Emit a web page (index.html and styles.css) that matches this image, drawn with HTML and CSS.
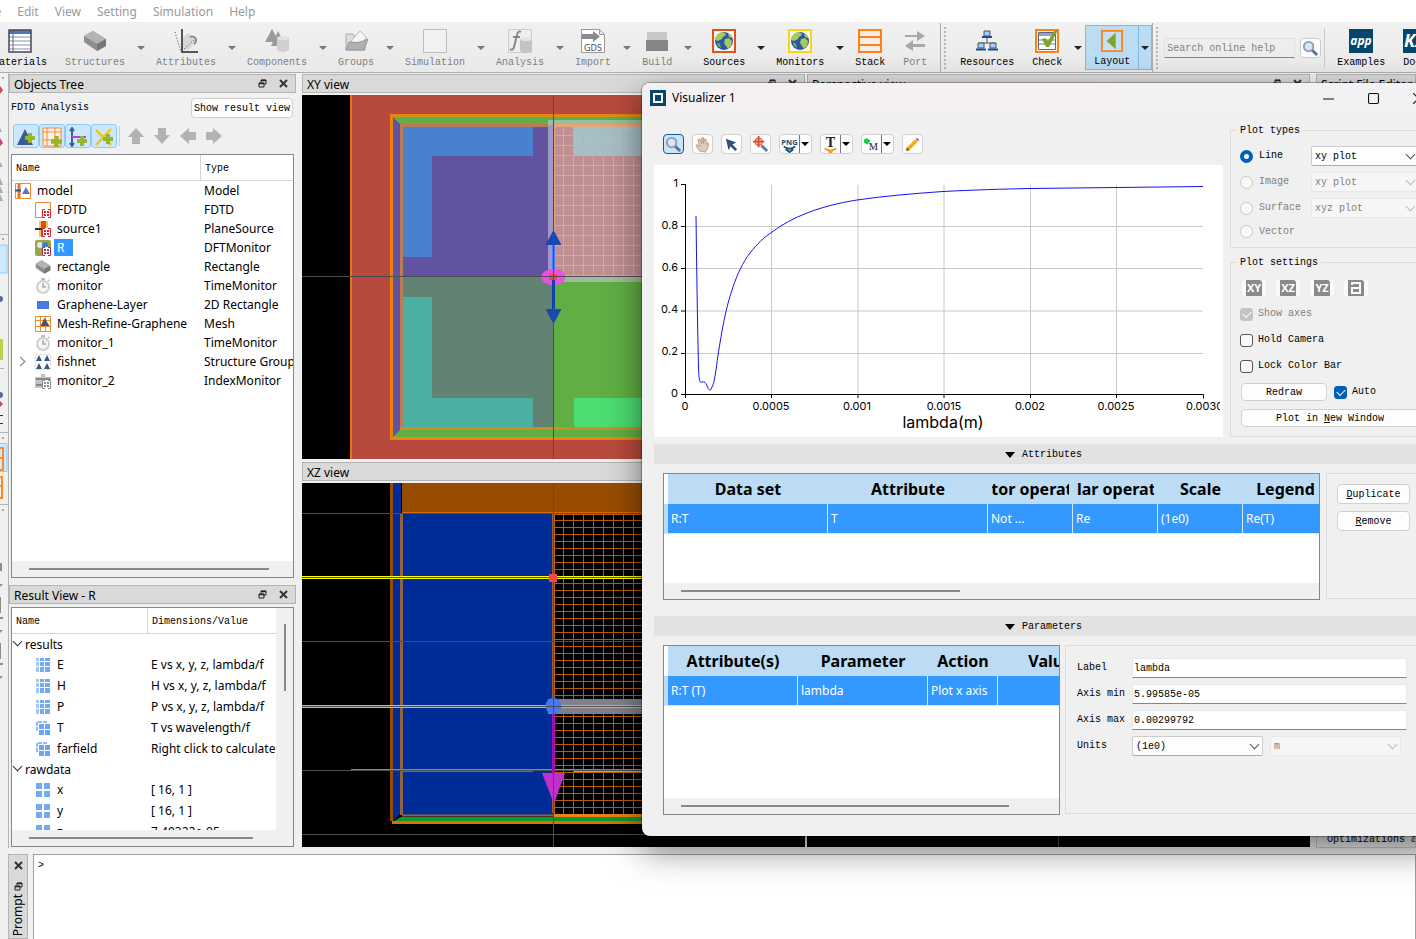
FILE: index.html
```html
<!doctype html>
<html lang="en">
<head>
<meta charset="utf-8">
<title>FDTD Solutions</title>
<link rel="stylesheet" href="styles.css">
</head>
<body>
<svg class="defs" aria-hidden="true">
  <symbol id="restore" viewBox="0 0 9 9"><path d="M3 3V1h5v4H6M1 4h5v4H1z" fill="none" stroke="#222"/><path d="M3 1.500h5M1 4.500h5" stroke="#222" stroke-width="1.500"/></symbol>
  <symbol id="cross" viewBox="0 0 9 9"><path d="M1 1l7 7M8 1L1 8" stroke="#333" stroke-width="2"/></symbol>
  <symbol id="brick" viewBox="0 0 24 24"><path d="M1 7l9-5 13 8v7l-9 5L1 13z" fill="#8e8e8e"/><path d="M1 7l9-5 13 8-9 5z" fill="#b4b4b4"/><path d="M14 15l9-5v7l-9 5z" fill="#777"/></symbol>
  <symbol id="globe" viewBox="0 0 24 24"><rect x="1" y="1" width="22" height="22" fill="#f6f6f2" stroke="currentColor" stroke-width="2"/><circle cx="12" cy="12" r="9" fill="#2857a6"/><path d="M6 5l4-2 3 1 1 2-3 2-1 2-4 2-3-1 1-4zM13 10l4-1 3 3-1 5-3 3-2-3-2-3zM16 4l3 2 1 3-3-1z" fill="#a8c95a"/><path d="M5 13l3 2 1 4-3-2z" fill="#7fae44"/></symbol>
  <symbol id="lens" viewBox="0 0 18 18"><path d="M10 10l6 6" stroke="#5b6e94" stroke-width="3"/><circle cx="7" cy="7" r="5" fill="#d9e6fa" stroke="#8f9ab0" stroke-width="2"/></symbol>
  <symbol id="clock" viewBox="0 0 16 16"><circle cx="8" cy="9" r="6" fill="#f6f6f6" stroke="#cfcfcf" stroke-width="2"/><path d="M8 5v4h3" fill="none" stroke="#aaa" stroke-width="1.500"/><path d="M6 1h4M13 2l1 1" stroke="#bbb" stroke-width="2"/></symbol>
  <symbol id="dots" viewBox="0 0 9 9"><path d="M0 0h9v9H0z" fill="#fff"/><path d="M3 .5H.5v8H3M6 .5h2.500v8H6" fill="none" stroke="currentColor"/><path d="M2 2h2v2H2zM5 2h2v2H5zM2 5h2v2H2zM5 5h2v2H5z" fill="currentColor"/></symbol>
  <symbol id="cube3" viewBox="0 0 14 14"><path d="M0 0h3v3H0zM4 0h4v3H4zM9 0h5v3H9zM0 4h3v4H0zM0 9h3v5H0z" fill="#a4c8f6"/><path d="M4 4h4v4H4zM9 4h5v4H9zM4 9h4v5H4zM9 9h5v5H9zM4 0h4v3H4zM9 0h5v3H9z" fill="#72abf5"/></symbol>
  <symbol id="cube2" viewBox="0 0 14 14"><path d="M1 10V1h10" fill="none" stroke="#90baf4" stroke-width="2" stroke-dasharray="4 1"/><path d="M3 3h5v5H3zM9 3h5v5H9zM3 9h5v5H3zM9 9h5v5H9z" fill="#68a5f5"/></symbol>
  <symbol id="cube1" viewBox="0 0 14 14"><path d="M0 0h6v6H0zM8 0h6v6H8zM0 8h6v6H0zM8 8h6v6H8z" fill="#72abf5"/></symbol>
  <symbol id="plus" viewBox="0 0 10 10"><path d="M3 0h4v3h3v4H7v3H3V7H0V3h3z" fill="#9ab52c"/></symbol>
  <symbol id="arrow" viewBox="0 0 18 18"><path d="M9 1l8 9h-4v7H5v-7H1z" fill="#b2b2b2"/></symbol>
  <pattern id="meshXY" x="261" y="40" width="10" height="10" patternUnits="userSpaceOnUse"><path d="M0 .5h10M.5 0v10" stroke="#deaa86"/></pattern>
  <pattern id="meshXZ" x="261" y="37" width="10" height="7" patternUnits="userSpaceOnUse"><path d="M0 .5h10M.5 0v7" stroke="#b45c08"/></pattern>
</svg>

<nav class="menubar">
  <a href="#">File</a><a href="#">Edit</a><a href="#">View</a><a href="#">Setting</a><a href="#">Simulation</a><a href="#">Help</a>
</nav>

<header class="toolbar">
  <div class="tools first">
    <button class="tool"><svg viewBox="0 0 24 24"><path d="M1 1h22v22H1z" fill="#fff"/><path d="M1 1h22v4H1z" fill="#4a78c0"/><path d="M1 8h22M1 12h22M1 16h22M1 20h22" stroke="#c3c8d6" stroke-width="2"/><path d="M5 1v22" stroke="#667"/><path d="M1 1h22v22H1z" fill="none" stroke="#4a4456" stroke-width="1.500"/></svg>Materials</button>
    <button class="tool" disabled><svg><use href="#brick"/></svg>Structures</button><button class="drop off" aria-label="Structures menu"></button>
    <button class="tool" disabled><svg viewBox="0 0 24 24"><path d="M7 9l8-5 7 9-8 8-7-1z" fill="#d6d6d6"/><path d="M8 0v23h16" fill="none" stroke="#555" stroke-width="2"/><path d="M1 3l6 20M8 22L20 11" stroke="#444" stroke-dasharray="1 2"/><path d="M16 8a4 4 0 1 1 4 7" fill="none" stroke="#888" stroke-width="2"/></svg>Attributes</button><button class="drop off" aria-label="Attributes menu"></button>
    <button class="tool" disabled><svg viewBox="0 0 24 24"><path d="M7 0l7 13H0zM13 2l8 15H6z" fill="#9b9b9b"/><path d="M12 9v12q6 4 12 0V9z" fill="#cfcfcf"/><ellipse cx="18" cy="9" rx="6" ry="2" fill="#e3e3e3"/></svg>Components</button><button class="drop off" aria-label="Components menu"></button>
    <button class="tool" disabled><svg viewBox="0 0 24 24"><path d="M2 5h7l2 3h10v13H2z" fill="#ddd" stroke="#aaa"/><path d="M7 12l9-10 6 6-4 9z" fill="#f6f6f6" stroke="#bbb"/><path d="M5 13q9 2 19-3l-4 11H2z" fill="#b0b0b0" stroke="#999"/></svg>Groups</button><button class="drop off" aria-label="Groups menu"></button>
    <button class="tool" disabled><svg viewBox="0 0 24 24"><path d="M.5.5h23v23H.5z" fill="#f1f1f1" stroke="#bdbdbd"/></svg>Simulation</button><button class="drop off" aria-label="Simulation menu"></button>
    <button class="tool" disabled><svg viewBox="0 0 24 24"><path d="M.5.5h23v23H.5z" fill="#eee" stroke="#ccc"/><path d="M13 3q-3-2-4 3L6 18q-1 4-4 2M5 8h7" fill="none" stroke="#888" stroke-width="2"/><path d="M12 10v12q6 3 12 0V10z" fill="#c4c4c4"/><ellipse cx="18" cy="10" rx="6" ry="2" fill="#e3e3e3"/></svg>Analysis</button><button class="drop off" aria-label="Analysis menu"></button>
    <button class="tool" disabled><svg viewBox="0 0 24 24"><path d="M.5.5h18l5 5v18H.5zM18.500.5v5h5" fill="#fff" stroke="#999"/><path d="M1 5h11V2l7 5.500-7 5.500v-3H1z" fill="#8a8a8a"/><text x="12" y="22" font-size="9" text-anchor="middle" class="sans" fill="#444">GDS</text></svg>Import</button><button class="drop off" aria-label="Import menu"></button>
    <button class="tool" disabled><svg viewBox="0 0 24 24"><path d="M2 3h20v8H2z" fill="#c8c8c8"/><path d="M1 11h22v11H1z" fill="#858585"/></svg>Build</button><button class="drop off" aria-label="Build menu"></button>
    <button class="tool"><svg color="#e0541c"><use href="#globe"/></svg>Sources</button><button class="drop" aria-label="Sources menu"></button>
    <button class="tool"><svg color="#f8d70c"><use href="#globe"/></svg>Monitors</button><button class="drop" aria-label="Monitors menu"></button>
    <button class="tool"><svg viewBox="0 0 24 24"><path d="M1 1h22v22H1zM1 8h22M1 16h22" fill="#f4efe9" stroke="#ff8212" stroke-width="2"/></svg>Stack</button>
    <button class="tool" disabled><svg viewBox="0 0 24 24"><path d="M2 6h12V2l8 5-8 5V8H2zM22 15H10v-4l-8 6 8 5v-4h12z" fill="#a8a8a8"/></svg>Port</button>
  </div>
  <div class="tools grip">
    <button class="tool"><svg viewBox="0 0 24 24"><path d="M12 7v7M4 17v-3h16v3" fill="none" stroke="#555"/><path d="M9 2h6v5H9zM3 14h6v5H3zM15 14h6v5h-6z" fill="#a9cdf2" stroke="#456"/><path d="M7 8h10M1 20.500h10M13 20.500h10" stroke="#1f4b94" stroke-width="2"/></svg>Resources</button>
    <button class="tool"><svg viewBox="0 0 24 24"><path d="M1 1h22v22H1z" fill="#f6f2ee" stroke="#ff8212" stroke-width="2"/><path d="M3.500 3.500h17v17h-17z" fill="#fff" stroke="#667"/><path d="M4 4h16v3H4z" fill="#88a6dd"/><path d="M4 11h16M4 15h16" stroke="#b8bfd4" stroke-width="2"/><path d="M7 10l3-1 3 3 6-10 4-1-9 17h-3z" fill="#7fa42c"/></svg>Check</button><button class="drop" aria-label="Check menu"></button>
    <div class="active"><button class="tool"><svg viewBox="0 0 24 24"><path d="M1 1h22v22H1z" fill="#c7dff2" stroke="#ff8212" stroke-width="2"/><path d="M16 3v18L6 12z" fill="#82a32e"/></svg>Layout</button><button class="drop" aria-label="Layout menu"></button></div>
  </div>
  <div class="tools grip">
    <input class="search" type="text" aria-label="Search online help" placeholder="Search online help">
    <button class="go" aria-label="Search"><svg><use href="#lens"/></svg></button>
    <span class="sep"></span>
    <button class="tool"><svg viewBox="0 0 24 24"><path d="M0 0h24v24H0z" fill="#05476a"/><text x="12" y="16" font-size="12" font-weight="bold" font-style="italic" text-anchor="middle" class="sans" fill="#fff">app</text></svg>Examples</button>
    <button class="tool"><svg viewBox="0 0 24 24"><path d="M0 0h24v24H0z" fill="#05476a"/><text x="1" y="18" font-size="18" font-weight="bold" font-style="italic" class="sans" fill="#fff">KX</text></svg>Docs</button>
  </div>
</header>

<main class="workspace">
  <svg class="rail">
    <path d="M0 73v-8l3 5zM0 331v-3l3 3-3 3" fill="#c2476a"/><path d="M0 13l3 4-3 4z" fill="#d0474f"/>
    <path d="M0 55l2 4H0zM0 89l3 5H0zM0 105l3 7H0zM0 113l3 7H0zM0 121l3 7H0z" fill="#aaa"/>
    <path d="M-2 172h9v28h-9z" fill="#cde8ff" stroke="#90c8f6"/><circle cx="0" cy="226" r="3" fill="#526a9c"/><circle cx="0" cy="322" r="3" fill="#526a9c"/>
    <path d="M0 266h3v21H0z" fill="#b7d64e"/><path d="M0 342.500h3M0 350.500h3" stroke="#333"/>
    <path d="M-2 370.500h9v28h-9z" fill="#cde8ff" stroke="#90c8f6"/><path d="M0 375h3v22H0M0 385h3M0 404h2v21H0M0 413h2" fill="none" stroke="#ff8c20" stroke-width="2"/>
    <path d="M0 161.500h8M0 295.500h4M0 359.500h8M0 431.500h8" stroke="#b4b4b4"/>
    <path d="M2 4h2v2H2zM2 165h2v2H2zM2 364h2v2H2zM2 436h2v2H2z" fill="#aaa"/>
    <path d="M0 490h2v8H0zM0 511h3l-3 3zM0 524h1v16H0zM0 544h3v2H0zM0 557h3l-3 3zM0 570h1v16H0zM0 590h3v2H0zM0 603h3l-3 3z" fill="#8d8d8d"/>
  </svg>

  <section class="left">
    <div class="title">Objects Tree<span class="winbtns"><svg><use href="#restore"/></svg><svg><use href="#cross"/></svg></span></div>
    <div class="analysis"><span>FDTD Analysis</span><button class="btn">Show result view</button></div>
    <div class="treetools">
      <button class="on" aria-label="Add structure"><svg viewBox="0 0 20 20"><path d="M9 2l8 16H1z" fill="#3b5c92"/><use href="#plus" x="9" y="6" width="10" height="10"/></svg></button>
      <button class="on" aria-label="Add mesh"><svg viewBox="0 0 20 20"><path d="M1 1h18v18H1zM5 1v18M13 1v18M1 5h18M1 13h18" fill="#fdf2e8" stroke="#f58a2c"/><use href="#plus" x="9" y="9" width="11" height="11"/></svg></button>
      <button class="on" aria-label="Add source"><svg viewBox="0 0 20 20"><path d="M4 1v18M2 4l2-3 2 3M2 16l2 3 2-3" fill="none" stroke="#3f5f9a" stroke-width="2"/><path d="M4 10h14" stroke="#c03ae0" stroke-width="2"/><use href="#plus" x="9" y="9" width="10" height="10"/></svg></button>
      <button class="on" aria-label="Add monitor"><svg viewBox="0 0 20 20"><path d="M2 3l15 15M17 2L2 18" stroke="#f0c419" stroke-width="2.500"/><use href="#plus" x="9" y="7" width="10" height="10"/></svg></button>
      <span class="sep"></span>
      <button aria-label="Move up"><svg><use href="#arrow"/></svg></button>
      <button aria-label="Move down"><svg class="down"><use href="#arrow"/></svg></button>
      <button aria-label="Move left"><svg class="back"><use href="#arrow"/></svg></button>
      <button aria-label="Move right"><svg class="fwd"><use href="#arrow"/></svg></button>
    </div>
    <div class="treebox objects">
      <div class="scroll">
      <table class="tree">
        <thead><tr><th>Name</th><th>Type</th></tr></thead>
        <tbody>
        <tr class="root"><td><svg viewBox="0 0 16 16"><path d="M.5.5h15v15H.5z" fill="#fff" stroke="#f28a30"/><path d="M4 1v14" stroke="#f0731c" stroke-width="3"/><path d="M0 7.500h6" stroke="#1c5f86" stroke-width="2"/><path d="M11 4l4 7H7z" fill="#5a78b5"/></svg><span>model</span></td><td>Model</td></tr>
        <tr><td><svg viewBox="0 0 16 16"><path d="M.5.5h15v15H.5z" fill="#fff" stroke="#f28a30"/><use href="#dots" x="7" y="7" width="9" height="9" color="#e02030"/></svg><span>FDTD</span></td><td>FDTD</td></tr>
        <tr><td><svg viewBox="0 0 16 16"><path d="M4 0h9v16H4z" fill="#f6c34c"/><path d="M6 0h5v16H6z" fill="#d5501c"/><path d="M0 8h9" stroke="#333" stroke-width="2"/><use href="#dots" x="7" y="7" width="9" height="9" color="#e02030"/></svg><span>source1</span></td><td>PlaneSource</td></tr>
        <tr><td><svg viewBox="0 0 16 16"><rect width="16" height="16" rx="2" fill="#9aa63f"/><circle cx="5" cy="5" r="3" fill="#d7ebf5"/><circle cx="10" cy="5" r="3" fill="#4c78c5"/><use href="#dots" x="7" y="7" width="9" height="9" color="#a0305c"/></svg><span class="sel">R</span></td><td>DFTMonitor</td></tr>
        <tr><td><svg><use href="#brick"/></svg><span>rectangle</span></td><td>Rectangle</td></tr>
        <tr><td><svg><use href="#clock"/></svg><span>monitor</span></td><td>TimeMonitor</td></tr>
        <tr><td><svg viewBox="0 0 16 16"><path d="M2 4h12v8H2z" fill="#4679e2"/></svg><span>Graphene-Layer</span></td><td>2D Rectangle</td></tr>
        <tr><td><svg viewBox="0 0 16 16"><path d="M.5.5h15v15H.5zM5.500 0v16M10.500 0v16M0 4.500h16M0 10.500h16" fill="#fff" stroke="#f28a30"/><path d="M9.500 2l5 8h-9z" fill="#3b5580"/></svg><span>Mesh-Refine-Graphene</span></td><td>Mesh</td></tr>
        <tr><td><svg><use href="#clock"/></svg><span>monitor_1</span></td><td>TimeMonitor</td></tr>
        <tr class="closed"><td><svg viewBox="0 0 16 16"><path d="M.5.5h15v15H.5z" fill="none" stroke="#ccc" stroke-dasharray="2 2"/><path d="M4 1l3 6H1zM12 1l3 6H9zM4 9l3 6H1zM12 9l3 6H9z" fill="#3d5780"/></svg><span>fishnet</span></td><td>Structure Group</td></tr>
        <tr><td><svg viewBox="0 0 16 16"><path d="M6 1h4v3h6v11H0V4h6z" fill="#c4c4c4"/><path d="M1 5h14v2H1zM1 11h7v2H1z" fill="#888"/><use href="#dots" x="7" y="7" width="9" height="9" color="#8a8a8a"/></svg><span>monitor_2</span></td><td>IndexMonitor</td></tr>
        </tbody>
      </table>
      </div>
      <div class="hbar"><i></i></div>
    </div>
    <div class="title second">Result View - R<span class="winbtns"><svg><use href="#restore"/></svg><svg><use href="#cross"/></svg></span></div>
    <div class="treebox results">
      <div class="scroll">
      <table class="tree">
        <thead><tr><th>Name</th><th>Dimensions/Value</th></tr></thead>
        <tbody>
        <tr class="open"><td><span>results</span></td><td></td></tr>
        <tr><td><svg><use href="#cube3"/></svg><span>E</span></td><td>E vs x, y, z, lambda/f</td></tr>
        <tr><td><svg><use href="#cube3"/></svg><span>H</span></td><td>H vs x, y, z, lambda/f</td></tr>
        <tr><td><svg><use href="#cube3"/></svg><span>P</span></td><td>P vs x, y, z, lambda/f</td></tr>
        <tr><td><svg><use href="#cube2"/></svg><span>T</span></td><td>T vs wavelength/f</td></tr>
        <tr><td><svg><use href="#cube2"/></svg><span>farfield</span></td><td>Right click to calculate</td></tr>
        <tr class="open"><td><span>rawdata</span></td><td></td></tr>
        <tr><td><svg><use href="#cube1"/></svg><span>x</span></td><td>[ 16, 1 ]</td></tr>
        <tr><td><svg><use href="#cube1"/></svg><span>y</span></td><td>[ 16, 1 ]</td></tr>
        <tr><td><svg><use href="#cube1"/></svg><span>z</span></td><td>7.49322e-05</td></tr>
        </tbody>
      </table>
      </div>
      <div class="vbar"><i></i></div>
      <div class="hbar"><i></i></div>
    </div>
  </section>

  <section class="views">
    <div class="title">XY view<span class="winbtns"><svg><use href="#restore"/></svg><svg><use href="#cross"/></svg></span></div>
    <svg class="canvas">
      <rect x="48" width="100%" height="100%" fill="#b84a3d"/>
      <path d="M49 0v2000" stroke="#e9750e" stroke-width="2"/>
      <rect x="89" y="20" width="600" height="324" fill="#60ae44"/>
      <path d="M91 22l8 8v304l-8 8z" fill="#6153a0"/>
      <path d="M700 20.500H89.500v323H700" fill="none" stroke="#ee7f10" stroke-width="3"/>
      <path d="M91 21.500h609M91 342.500h609" stroke="#c99a22"/>
      <rect x="101" y="32" width="150" height="149" fill="#6153a0"/>
      <rect x="101" y="181" width="150" height="152" fill="#628273"/>
      <path d="M101 32h130v29H130v101h-29z" fill="#4881ce"/>
      <path d="M101 202h29v101h101v30H101z" fill="#4bafa2"/>
      <rect x="272" y="303" width="300" height="30" fill="#4bdc72"/>
      <path d="M251 30.500H99.500v303" fill="none" stroke="#b97c55" stroke-width="3"/>
      <path d="M98 333.500h602" stroke="#c98f22" stroke-width="3"/>
      <rect x="246" y="25" width="400" height="162" fill="#9ebb9b"/>
      <rect x="246" y="30" width="6" height="157" fill="#9f97c5"/>
      <rect x="251" y="29" width="400" height="4" fill="#e0a67c"/>
      <rect x="252" y="32" width="400" height="150" fill="#c08f92"/>
      <rect x="272" y="32" width="400" height="29" fill="#a9bfc6"/>
      <rect x="252" y="32" width="400" height="150" fill="url(#meshXY)"/>
      <path d="M252 182.500h400M252.500 32v150" stroke="#e2a47a"/>
      <ellipse cx="251.500" cy="182" rx="12" ry="8" fill="#ea4fe6"/>
      <path d="M251.500 150v24" stroke="#4881ff" stroke-width="3"/><path d="M251.500 185v30" stroke="#0a3aa8" stroke-width="3"/>
      <path d="M251.500 135l8 15h-16zM251.500 229l8-15h-16z" fill="#1b46ac"/>
      <rect x="247" y="179" width="8" height="6" fill="#f84545"/>
      <path d="M251.500 0v2000M0 181.500h2000" stroke="#4d4d4d"/>
    </svg>
    <div class="title lowtitle">XZ view</div>
    <svg class="canvas">
      <rect x="100" width="600" height="30" fill="#984c00"/>
      <path d="M89.500 0v338" stroke="#984c00" stroke-width="3"/>
      <path d="M91 0h8v330l-8 8z" fill="#002c97"/>
      <rect x="101" y="31" width="150" height="301" fill="#002c97"/>
      <path d="M100 29.500h600" stroke="#d96c00"/>
      <path d="M99.500 31v301" stroke="#94603f" stroke-width="3"/>
      <rect x="252" y="31" width="400" height="300" fill="url(#meshXZ)"/>
      <path d="M252.500 31v300M252 31.500h400" stroke="#c06408"/>
      <path d="M251 30v300M100 332.500h151" stroke="#94603f" stroke-width="2"/><path d="M252 332.500h400" stroke="#ee7f10" stroke-width="3"/>
      <path d="M99 334h600v4H92z" fill="#089a2c"/><path d="M90 339.500h600" stroke="#dd7000" stroke-width="3"/>
      <path d="M0 30.500h2000M0 158.500h2000M0 287.500h2000M0 351.500h2000" stroke="#4d4d4d"/>
      <rect x="246" y="216" width="400" height="15" fill="#80808c"/>
      <path d="M0 222.500h2000M0 224.500h2000" stroke="#b4b4cc"/><path d="M0 93.500h2000M0 95.500h2000" stroke="#ff0"/>
      <path d="M49 286.500h600" stroke="#d9770f"/><path d="M101 288.500h130" stroke="#2f7bdc"/><path d="M272 288.500h400" stroke="#4fd0d8"/>
      <circle cx="251.500" cy="223" r="8" fill="#4678f5"/>
      <path d="M251.500 231v60" stroke="#a50fae" stroke-width="3"/><path d="M240 290h23l-11 31z" fill="#bf30cc"/>
      <path d="M251.500 0v2000M0 94.500h2000M0 223.500h2000" stroke="#4d4d4d"/>
      <rect x="247" y="91" width="8" height="8" fill="#f84545"/>
    </svg>
  </section>

  <section class="views">
    <div class="title">Perspective view<span class="winbtns"><svg><use href="#restore"/></svg><svg><use href="#cross"/></svg></span></div>
    <svg class="canvas"><path d="M251.500 0v2000" stroke="#4d4d4d"/></svg>
  </section>

  <section class="editor">
    <div class="title">Script File Editor</div>
    <div class="page"></div>
    <div class="tab">Optimizations and Sweeps</div>
  </section>
</main>

<footer class="prompt">
  <div class="spine"><svg><use href="#cross"/></svg><svg><use href="#restore"/></svg><span>Script Prompt</span></div>
  <textarea class="console" aria-label="Script prompt">&gt;</textarea>
</footer>

<section class="visualizer">
  <div class="wintitle">
    <svg class="logo" viewBox="0 0 16 16"><path d="M0 0h16v16H0z" fill="#05476a"/><path d="M4 4h8v8H4z" fill="none" stroke="#fff" stroke-width="2"/></svg>
    <span>Visualizer 1</span>
    <button aria-label="Minimize"><svg viewBox="0 0 10 10"><path d="M0 5.500h10" stroke="#111"/></svg></button>
    <button aria-label="Maximize"><svg viewBox="0 0 10 10"><rect x=".5" y=".5" width="9" height="9" rx="1" fill="none" stroke="#111"/></svg></button>
    <button aria-label="Close"><svg viewBox="0 0 10 10"><path d="M0 0l10 10M10 0L0 10" stroke="#111"/></svg></button>
  </div>
  <div class="upper">
    <div class="figure">
      <div class="plottools">
        <button class="pt on" aria-label="Zoom"><svg><use href="#lens"/></svg></button>
        <button class="pt" aria-label="Pan"><svg viewBox="0 0 18 18"><path d="M6 16l-4-6 1-1 3 2-2-7 2-1 2 5V2h2v6l1-5 2 1v5l2-2v5l-3 5z" fill="#dfcbb8" stroke="#b39c88"/></svg></button>
        <button class="pt" aria-label="Select"><svg viewBox="0 0 18 18"><path d="M3 3l11 4-4 2 5 5-2 2-5-5-2 4z" fill="#32507f"/></svg></button>
        <button class="pt" aria-label="Data cursor"><svg viewBox="0 0 18 18"><path d="M10 10l6 6" stroke="#65799e" stroke-width="3"/><circle cx="7" cy="6" r="4" fill="#f5b9a6" stroke="#d4502e"/><path d="M7 0v12M1 6h12" stroke="#d4502e" stroke-width="2"/></svg></button>
        <span class="pair"><button aria-label="Export image"><svg viewBox="0 0 18 18"><text x="9" y="9" font-size="8" font-weight="bold" text-anchor="middle" class="sans" fill="#14506e">PNG</text><path d="M3 11q6 5 12 0M5 14l4 3 4-3" fill="none" stroke="#14506e" stroke-width="2"/></svg></button><button class="tri" aria-label="Export options"></button></span>
        <span class="pair"><button aria-label="Text"><svg viewBox="0 0 18 18"><text x="9" y="12" font-size="15" font-weight="bold" text-anchor="middle" class="serif" fill="#222">T</text><path d="M3 13q6 5 12 0M7 16l2 2 2-2" fill="none" stroke="#f39a1e" stroke-width="2"/></svg></button><button class="tri" aria-label="Text options"></button></span>
        <span class="pair"><button aria-label="Marker"><svg viewBox="0 0 18 18"><path d="M1 4l3-2 4 3-3 4-4-2z" fill="#16cf3e"/><text x="11" y="15" font-size="11" text-anchor="middle" class="serif" fill="#222">M</text></svg></button><button class="tri" aria-label="Marker options"></button></span>
        <button class="pt" aria-label="Edit"><svg viewBox="0 0 18 18"><path d="M4 14l9-9" stroke="#e9b018" stroke-width="4"/><path d="M12 3l2-1 2 2-1 2z" fill="#e2548e"/><path d="M2 16l1-4 3 3z" fill="#7a5a20"/></svg></button>
      </div>
      <svg class="plot" viewBox="0 0 569 272">
        <path d="M117.500 20v209M204 20v209M290 20v209M376.500 20v209M462.500 20v209M31 61.500h518M31 103.500h518M31 146h518M31 188.500h518" stroke="#c8c8c8"/>
        <path d="M31.500 19v214M27 229.500h522.500v4M27 19.500h4M27 61.500h4M27 103.500h4M27 146h4M27 188.500h4M117.500 229v4M204 229v4M290 229v4M376.500 229v4M462.500 229v4" fill="none" stroke="#000"/>
        <path fill="none" stroke="#1414f0" d="M42 51L42.500 90 43.500 155 44.500 203C45 217 46 218 48 217C53 215 53 225 56 225C57 225 57.500 223.500 58 222C60.500 218 62 205 64 190C68 166 71 145 79 122C83 110 89 97 96 88C103 79 110 72.500 118 67C128 59.500 140 53 153 48C167 42.500 184 38 203 35C230 31 260 28.500 289 26.500C318 25 350 24 376 23.500L549 21.500"/>
        <g class="ylab"><text x="24" y="22">1</text><text x="24" y="64">0.8</text><text x="24" y="106">0.6</text><text x="24" y="148">0.4</text><text x="24" y="190">0.2</text><text x="24" y="232">0</text></g>
        <g class="xlab"><text x="31" y="245">0</text><text x="117" y="245">0.0005</text><text x="203" y="245">0.001</text><text x="290" y="245">0.0015</text><text x="376" y="245">0.002</text><text x="462" y="245">0.0025</text></g>
        <svg width="566" height="272"><text x="532" y="245">0.0030</text></svg>
        <text class="axis" x="289" y="263">lambda(m)</text>
      </svg>
    </div>
    <div class="options">
      <fieldset><legend>Plot types</legend>
        <div class="opt"><label class="kind"><input type="radio" name="kind" checked>Line</label><span class="combo"><select aria-label="Line plot"><option>xy plot</option></select></span></div>
        <div class="opt off"><label class="kind"><input type="radio" name="kind" disabled>Image</label><span class="combo"><select aria-label="Image plot" disabled><option>xy plot</option></select></span></div>
        <div class="opt off"><label class="kind"><input type="radio" name="kind" disabled>Surface</label><span class="combo"><select aria-label="Surface plot" disabled><option>xyz plot</option></select></span></div>
        <div class="opt off short"><label class="kind"><input type="radio" name="kind" disabled>Vector</label></div>
      </fieldset>
      <fieldset><legend>Plot settings</legend>
        <div class="opt planes"><button disabled><b>XY</b></button><button disabled><b>XZ</b></button><button disabled><b>YZ</b></button><button disabled aria-label="Camera"><svg viewBox="0 0 16 16"><path d="M0 0h13l3 3v13H0z" fill="#8a8a8a"/><path d="M4 5V3h8v10H4V8h8" fill="none" stroke="#fff" stroke-width="2"/></svg></button></div>
        <div class="opt off"><label><input type="checkbox" checked disabled>Show axes</label></div>
        <div class="opt"><label><input type="checkbox">Hold Camera</label></div>
        <div class="opt"><label><input type="checkbox">Lock Color Bar</label></div>
        <div class="opt redraw"><button class="btn">Redraw</button><label><input type="checkbox" checked>Auto</label></div>
        <div class="opt"><button class="btn wide">Plot in <u>N</u>ew Window</button></div>
      </fieldset>
    </div>
  </div>

  <div class="bar"><i></i>Attributes</div>
  <div class="lower">
    <div class="databox attrs">
      <div class="scroll">
      <table class="data">
        <colgroup><col class="c4"><col class="c160"><col class="c160"><col class="c85"><col class="c85"><col class="c85"><col class="c85"></colgroup>
        <thead><tr><th></th><th><div>Data set</div></th><th><div>Attribute</div></th><th><div>Vector operation</div></th><th><div>Scalar operation</div></th><th><div>Scale</div></th><th><div>Legend</div></th></tr></thead>
        <tbody><tr><td></td><td>R:T</td><td>T</td><td>Not ...</td><td>Re</td><td>(1e0)</td><td>Re(T)</td></tr></tbody>
      </table>
      </div>
      <div class="hbar"><i></i></div>
    </div>
    <div class="side actions"><button class="btn"><u>D</u>uplicate</button><button class="btn"><u>R</u>emove</button></div>
  </div>

  <div class="bar"><i></i>Parameters</div>
  <div class="lower">
    <div class="databox params">
      <div class="scroll">
      <table class="data">
        <colgroup><col class="c4"><col class="c130"><col class="c130"><col class="c70"><col class="c105"></colgroup>
        <thead><tr><th></th><th><div>Attribute(s)</div></th><th><div>Parameter</div></th><th><div>Action</div></th><th><div>Value</div></th></tr></thead>
        <tbody><tr><td></td><td>R:T (T)</td><td>lambda</td><td>Plot x axis</td><td></td></tr></tbody>
      </table>
      </div>
      <div class="hbar"><i></i></div>
    </div>
    <form class="side axisform">
      <label for="lab">Label</label><input type="text" id="lab" value="lambda">
      <label for="amin">Axis min</label><input type="text" id="amin" value="5.99585e-05">
      <label for="amax">Axis max</label><input type="text" id="amax" value="0.00299792">
      <label for="units">Units</label>
      <div class="units"><span class="combo"><select id="units"><option>(1e0)</option></select></span><span class="combo gray"><select aria-label="Unit name" disabled><option>m</option></select></span></div>
    </form>
  </div>
</section>
</body>
</html>
```
FILE: styles.css
```css
*{
	box-sizing: border-box;
}
body{
	margin: 0;
	height: 100vh;
	display: flex;
	flex-direction: column;
	overflow: hidden;
	position: relative;
	background: #f0f0f0;
	color: #000;
	font: 12px/16px "Noto Sans", "Open Sans", sans-serif;
}
button, input, select, textarea, fieldset, legend{
	margin: 0;
	padding: 0;
	border: 0;
	background: none;
	color: inherit;
	font: 10px/14px "Liberation Mono", monospace;
}
svg{
	display: block;
}
.defs{
	position: absolute;
	width: 0;
	height: 0;
}
.sans{
	font-family: "Open Sans", sans-serif;
}
.serif{
	font-family: "Liberation Serif", serif;
}

/* menu and toolbar */
.menubar{
	display: flex;
	gap: 16px;
	height: 23px;
	margin-left: -18px;
	padding-top: 4px;
	flex: none;
	background: #fff;
	border-bottom: 1px solid #eee;
}
.menubar a{
	color: #999;
	text-decoration: none;
}
.toolbar{
	display: flex;
	flex: none;
	height: 50px;
	background: linear-gradient(#f1f1f1, #e9e9e9);
	border-bottom: 1px solid #adadad;
}
.tools{
	display: flex;
	align-items: stretch;
	flex: none;
}
.first{
	margin-left: -16px;
	padding-right: 4px;
}
.grip{
	padding-left: 10px;
	position: relative;
	border-left: 1px solid #adadad;
}
.grip::before{
	content: "";
	position: absolute;
	left: 3px;
	top: 4px;
	bottom: 3px;
	border-left: 2px dotted #b4b4b4;
}
.tool{
	display: flex;
	flex-direction: column;
	align-items: center;
	gap: 3px;
	padding: 6px 9px 0;
}
.tool svg{
	width: 24px;
	height: 24px;
}
.tool:disabled{
	color: #808080;
}
.drop{
	width: 13px;
}
.drop::before{
	content: "";
	display: block;
	margin: 0 3px;
	border: 4px solid transparent;
	border-top-color: #222;
	border-bottom: 0;
}
.off.drop::before{
	border-top-color: #777;
}
.active{
	display: flex;
	margin: 2px 0 2px 1px;
	background: #bcdcf4;
	border: 1px solid #7fb9e6;
}
.active .tool{
	padding: 4px 8px 0;
}
.active .drop{
	border-left: 1px solid #7fb9e6;
}
.active .drop::before{
	margin: 0 2px;
}
.search{
	align-self: center;
	width: 131px;
	height: 20px;
	margin: 1px 5px 0 1px;
	padding-left: 2px;
	border: 1px solid #e2e2e2;
	border-bottom-color: #868686;
}
.search::placeholder{
	color: #808080;
}
.go{
	align-self: center;
	width: 21px;
	height: 20px;
	padding: 1px;
	background: #fdfdfd;
	border: 1px solid #ccc;
	border-radius: 3px;
}
.go svg, .pt svg, .pair svg{
	width: 17px;
	height: 17px;
}
.toolbar .sep{
	width: 1px;
	margin: 5px 3px 4px 3px;
	background: #ccc;
}

/* docks */
.workspace{
	display: flex;
	flex: 1;
	min-height: 0;
}
.rail{
	width: 9px;
	height: 100%;
	flex: none;
	border-right: 1px solid #b4b4b4;
}
.title{
	position: relative;
	flex: none;
	height: 19px;
	padding: 2px 0 0 4px;
	background: #d9d9d9;
	border: 1px solid #b4b4b4;
	white-space: nowrap;
	overflow: hidden;
}
.winbtns{
	position: absolute;
	right: 7px;
	top: 4px;
	display: flex;
	gap: 12px;
}
.winbtns svg{
	width: 9px;
	height: 9px;
}
.left{
	display: flex;
	flex-direction: column;
	flex: none;
	width: 287px;
	padding: 1px 0;
}
.analysis{
	display: flex;
	justify-content: space-between;
	align-items: center;
	margin: 5px 3px 6px 2px;
	font: 10px/14px "Liberation Mono", monospace;
}
.btn{
	height: 20px;
	padding: 1px 2px 0;
	background: #fdfdfd;
	border: 1px solid #d0d0d0;
	border-radius: 4px;
	white-space: nowrap;
}
.treetools{
	display: flex;
	align-items: center;
	margin: 0 4px 6px;
}
.treetools button{
	width: 26px;
	height: 24px;
	padding: 3px 4px;
}
.treetools .on{
	background: #cce8ff;
	border: 1px solid #90c8f6;
	border-radius: 3px;
	padding: 2px;
}
.treetools .on svg{
	width: 20px;
	height: 20px;
}
.treetools svg{
	width: 18px;
	height: 18px;
}
.treetools .sep{
	width: 1px;
	height: 20px;
	margin: 0 3px 0 2px;
	background: #d0d0d0;
}
.down{
	transform: rotate(180deg);
}
.back{
	transform: rotate(-90deg);
}
.fwd{
	transform: rotate(90deg);
}
.treebox{
	display: grid;
	grid-template: minmax(0, 1fr) 16px / minmax(0, 1fr) auto;
	margin: 0 2px;
	background: #fff;
	border: 1px solid #828790;
}
.scroll{
	overflow: hidden;
}
.objects{
	flex: 1;
	min-height: 0;
}
.results{
	height: 240px;
	margin-top: 3px;
}
.second{
	margin-top: 7px;
}
.tree{
	width: 100%;
	table-layout: fixed;
	border-collapse: separate;
	border-spacing: 0;
	white-space: nowrap;
}
.tree th{
	height: 26px;
	padding: 2px 0 0 4px;
	text-align: left;
	border-bottom: 1px solid #d5d5d5;
	font: 10px/14px "Liberation Mono", monospace;
}
.tree th:first-child{
	width: 189px;
	border-right: 1px solid #d5d5d5;
}
.results th:first-child{
	width: 136px;
}
.tree td{
	height: 19px;
	padding: 0 0 0 3px;
	overflow: hidden;
}
.tree td:first-child{
	position: relative;
	padding-left: 23px;
}
.tree .root td:first-child{
	padding-left: 3px;
}
.tree td svg{
	display: inline-block;
	width: 16px;
	height: 16px;
	vertical-align: middle;
}
.tree td span{
	display: inline-block;
	height: 17px;
	margin-left: 3px;
	padding: 1px 3px 0;
	vertical-align: middle;
}
.tree .sel{
	padding-right: 9px;
	background: #3399ff;
	color: #fff;
}
.results td{
	height: 21px;
}
.results .tree td svg{
	width: 14px;
	height: 14px;
	margin: 0 1px;
}
.results .open td{
	height: 20px;
}
.results .open td:first-child{
	padding-left: 7px;
}
.open td:first-child::before, .closed td:first-child::before, .combo::after{
	content: "";
	position: absolute;
	width: 6px;
	height: 6px;
	left: 2px;
	top: 4px;
	border: solid #333;
	border-width: 0 1px 1px 0;
	transform: rotate(45deg);
}
.closed td:first-child::before{
	left: 5px;
	top: 6px;
	border-color: #777;
	transform: rotate(-45deg);
}
.hbar{
	grid-row: 2;
	grid-column: 1 / 3;
	background: #f0f0f0;
	padding: 7px 0 0 17px;
}
.hbar i{
	display: block;
	width: 240px;
	height: 2px;
	background: #888;
}
.results .hbar i{
	width: 224px;
}
.vbar{
	width: 17px;
	padding: 16px 0 0 8px;
	background: #f0f0f0;
}
.vbar i{
	display: block;
	width: 2px;
	height: 67px;
	background: #888;
}

/* CAD views */
.views{
	display: flex;
	flex-direction: column;
	gap: 2px;
	width: 503px;
	margin-left: 6px;
	padding: 1px 0;
	flex: none;
}
.views + .views{
	margin-left: 2px;
}
.lowtitle{
	margin-top: 1px;
}
.canvas{
	width: 100%;
	flex: 1;
	min-height: 0;
	background: #000;
}
.editor{
	display: flex;
	flex-direction: column;
	flex: 1;
	min-width: 0;
	margin-left: 6px;
	padding-top: 1px;
}
.page{
	flex: 1;
	background: #fff;
}
.tab{
	height: 18px;
	padding: 2px 10px;
	overflow: hidden;
	white-space: nowrap;
	border: 1px solid #ccc;
	font: 10px/14px "Liberation Mono", monospace;
}
.prompt{
	display: flex;
	flex: none;
	height: 91px;
	padding: 6px 0 0 8px;
}
.spine{
	display: flex;
	flex-direction: column;
	align-items: center;
	gap: 12px;
	width: 20px;
	margin-right: 5px;
	padding-top: 6px;
	background: #d9d9d9;
	border: 1px solid #b4b4b4;
	overflow: hidden;
}
.spine svg{
	width: 9px;
	height: 9px;
	flex: none;
}
.spine span{
	writing-mode: vertical-rl;
	transform: rotate(180deg);
	margin-top: -9px;
	white-space: nowrap;
}
.console{
	flex: 1;
	resize: none;
	padding: 4px;
	background: #fff;
	border: 1px solid #a0a0a0;
	border-bottom: 0;
}

/* floating plot window */
.visualizer{
	position: absolute;
	left: 642px;
	right: -25px;
	top: 83px;
	padding-bottom: 21px;
	background: #f0f0f0;
	border-radius: 8px;
	overflow: hidden;
	box-shadow: 0 0 1px 1px rgba(0,0,0,.3), 0 14px 34px rgba(0,0,0,.5);
}
.wintitle{
	display: flex;
	align-items: center;
	height: 30px;
	padding-left: 8px;
	background: linear-gradient(to right, #f3f0f3, #f7f0f0 45%, #f2f2f5 75%);
}
.wintitle span{
	flex: 1;
	margin-left: 6px;
}
.logo{
	width: 16px;
	height: 16px;
}
.wintitle button{
	width: 45px;
	height: 28px;
	padding: 0 17px;
}
.wintitle button svg{
	width: 11px;
	height: 11px;
}
.upper{
	display: flex;
	gap: 7px;
	padding: 0 12px;
}
.figure{
	width: 569px;
	flex: none;
}
.plottools{
	display: flex;
	gap: 8px;
	padding: 21px 9px 11px;
}
.pt, .pair{
	width: 21px;
	height: 20px;
	padding: 1px;
	background: #fdfdfd;
	border: 1px solid #d0d0d0;
	border-radius: 4px;
}
.pt.on{
	background: #cce4f7;
	border-color: #0a5aa0;
}
.pair{
	display: flex;
	width: 33px;
	padding: 0;
}
.pair button:first-child{
	width: 20px;
	padding-left: 1px;
	border-right: 1px solid #777;
}
.tri::before, .bar i{
	content: "";
	display: block;
	margin: 1px 1px;
	border: 4px solid transparent;
	border-top-color: #000;
	border-bottom: 0;
}
.plot{
	width: 100%;
	background: #fff;
	font: 11px Inter, sans-serif;
}
.ylab{
	text-anchor: end;
}
.xlab, .axis{
	text-anchor: middle;
}
.axis{
	font-size: 16px;
}
.options{
	flex: 1;
	padding-top: 10px;
}
fieldset{
	position: relative;
	padding: 6px 9px 5px;
	border: 1px solid #dcdcdc;
	margin-bottom: 7px;
}
fieldset:last-child{
	margin-bottom: 0;
}
legend{
	padding: 0 3px;
	margin-left: -3px;
	height: 14px;
	line-height: 16px;
}
.opt{
	display: flex;
	align-items: center;
	height: 26px;
	font: 10px/14px "Liberation Mono", monospace;
}
.opt.short{
	height: 21px;
}
.opt.off{
	color: #808080;
}
.opt label{
	display: flex;
	align-items: center;
	gap: 5px;
}
.opt .kind{
	width: 71px;
	gap: 6px;
}
.opt input{
	appearance: none;
	position: relative;
	width: 13px;
	height: 13px;
	background: #f8f8f8;
	border: 1px solid #555;
	border-radius: 3px;
}
.opt input[type=radio]{
	border-radius: 50%;
}
.opt input[type=radio]:checked{
	background: #fff;
	border: 4px solid #005fb8;
}
.opt input:disabled{
	border-color: #c8c8c8;
}
.opt input[type=checkbox]:checked{
	background: #005fb8;
	border-color: #005fb8;
}
.opt input[type=checkbox]:checked:disabled{
	background: #c3c3c3;
	border-color: #c3c3c3;
}
.opt input[type=checkbox]:checked::after{
	content: "";
	position: absolute;
	left: 2px;
	top: 2px;
	width: 7px;
	height: 4px;
	border: solid #fff;
	border-width: 0 0 1px 1px;
	transform: rotate(-45deg);
}
.combo{
	position: relative;
	flex: 1;
	height: 20px;
}
.combo select{
	appearance: none;
	width: 100%;
	height: 20px;
	padding: 1px 3px 0;
	background: #fdfdfd;
	border: 1px solid #ccc;
	border-bottom-color: #aaa;
	border-radius: 2px;
}
.combo::after{
	left: auto;
	right: 5px;
	top: 5px;
	border-color: #555;
}
.combo select:disabled{
	color: #808080;
	opacity: 1;
	background: #f6f6f6;
	border-color: #e8e8e8;
}
.off .combo::after, .gray::after{
	border-color: #bbb;
}
.planes{
	gap: 10px;
	padding-left: 2px;
}
.planes button{
	display: flex;
	justify-content: center;
	width: 24px;
	height: 16px;
	background: #fafafa;
	border-radius: 3px;
}
.planes b, .planes svg{
	width: 16px;
	height: 16px;
	background: #8a8a8a;
	color: #fff;
	border-radius: 0 3px 0 0;
	font: bold 11px/16px "Open Sans", sans-serif;
}
.redraw{
	gap: 7px;
}
.redraw .btn{
	width: 86px;
	height: 18px;
	margin-left: 1px;
}
.btn.wide{
	flex: 1;
	height: 18px;
	margin-left: 1px;
}
.bar{
	display: flex;
	align-items: center;
	justify-content: center;
	height: 20px;
	margin: 7px 8px 9px 12px;
	padding-top: 1px;
	background: #e2e2e2;
	font: 10px/14px "Liberation Mono", monospace;
}
.bar i{
	margin: 0 7px 0 0;
	border-width: 6px 5px 0;
}
.lower{
	display: flex;
	padding: 0 20px 0 21px;
}
.lower + .bar{
	margin-top: 16px;
}
.databox{
	display: grid;
	grid-template: minmax(0, 1fr) 16px / minmax(0, 1fr);
	flex: none;
	background: #fff;
	border: 1px solid #828790;
}
.databox .hbar{
	grid-column: 1;
}
.attrs{
	width: 657px;
	height: 127px;
	margin-right: 6px;
}
.params{
	width: 397px;
	height: 170px;
	margin-right: 5px;
}
.attrs .hbar i{
	width: 279px;
}
.params .hbar i{
	width: 328px;
}
.data{
	table-layout: fixed;
	width: 664px;
	border-collapse: separate;
	border-spacing: 0;
}
.params .data{
	width: 439px;
}
.c4{
	width: 4px;
}
.c70{
	width: 70px;
}
.c85{
	width: 85px;
}
.c105{
	width: 105px;
}
.c130{
	width: 130px;
}
.c160{
	width: 160px;
}
.data th{
	height: 30px;
	padding: 0 4px;
	background: #bbdcf4;
	font-size: 16px;
	line-height: 22px;
}
.data th div{
	display: flex;
	justify-content: center;
	overflow: hidden;
	white-space: nowrap;
}
.data th:first-child{
	background: #fff;
	padding: 0;
}
.data td{
	height: 30px;
	padding: 0 3px;
	background: #3399ff;
	color: #fff;
	border-right: 1px solid #d5e6f5;
	border-bottom: 1px solid #d5e6f5;
	white-space: nowrap;
}
.data td:first-child{
	padding: 0;
	background: #bbdcf4;
	border-right: 0;
}
.side{
	flex: 1;
	margin-bottom: 1px;
	border: 1px solid #dcdcdc;
}
.actions{
	display: flex;
	flex-direction: column;
	gap: 7px;
	padding: 10px;
}
.axisform{
	display: grid;
	grid-template-columns: 55px 1fr;
	grid-auto-rows: 20px;
	align-content: start;
	align-items: center;
	row-gap: 6px;
	padding: 12px 13px 0 11px;
	font: 10px/14px "Liberation Mono", monospace;
}
.axisform input{
	height: 20px;
	padding: 0 1px;
	background: #fff;
	border: 1px solid #e8e8e8;
	border-bottom-color: #868686;
}
.units{
	display: flex;
	gap: 7px;
	margin-right: 6px;
}
```
